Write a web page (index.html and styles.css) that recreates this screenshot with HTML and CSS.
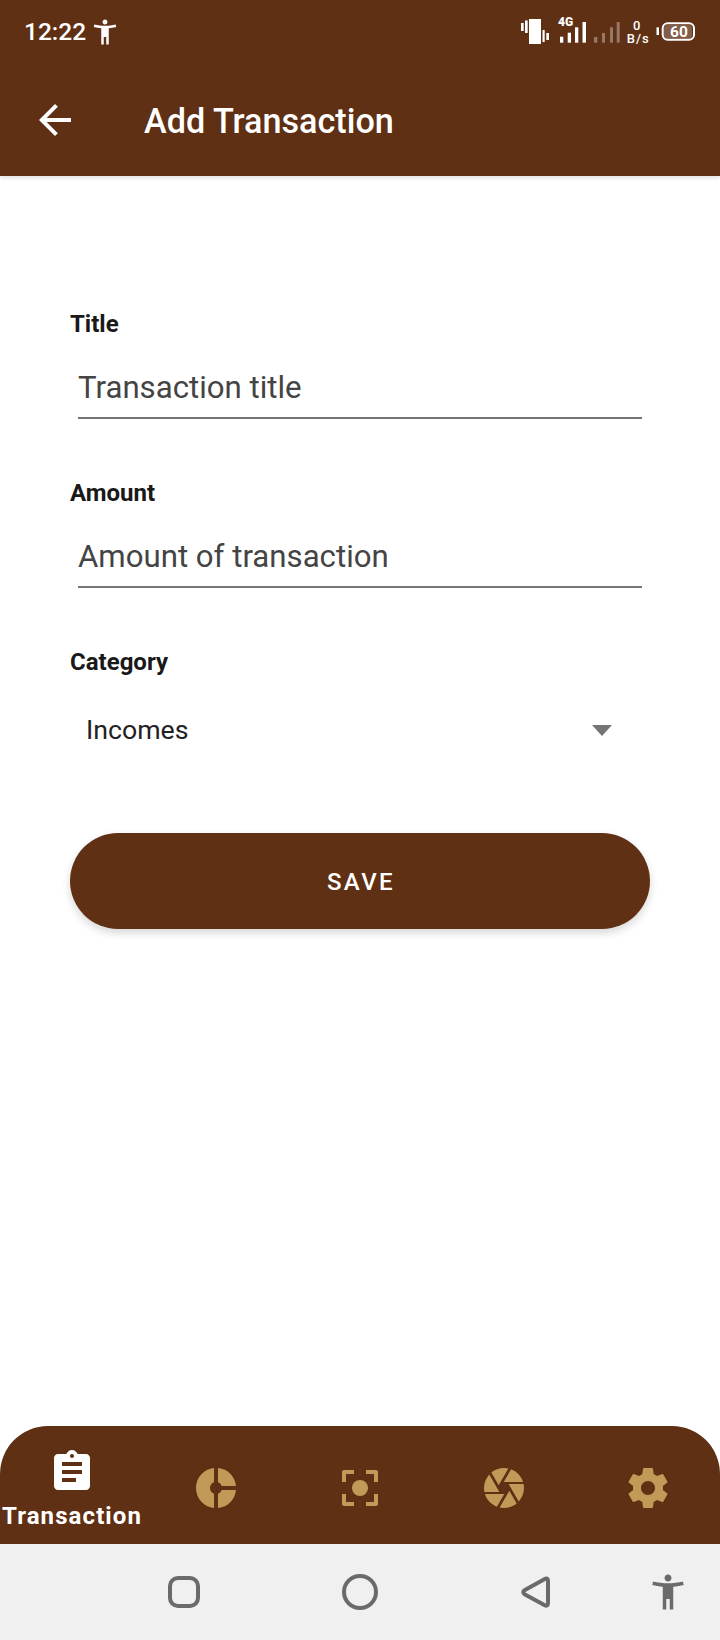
FILE: index.html
```html
<!DOCTYPE html>
<html lang="en">
<head>
    <meta charset="UTF-8">
    <meta name="viewport" content="width=device-width, initial-scale=1.0">
    <title>Add Transaction</title>
    <link rel="stylesheet" href="styles.css">
</head>
<body>
    <header class="app_header">
        <div class="status_bar">
            <div class="status_left">
                <span class="status_time">12:22</span>
                <svg class="status_person" viewBox="0 0 24 24"><path d="M20.5 6c-2.61.7-5.67 1-8.5 1s-5.89-.3-8.5-1L3 8c1.86.5 4 .83 6 1v13h2v-6h2v6h2V9c2-.17 4.14-.5 6-1l-.5-2zM12 6c1.1 0 2-.9 2-2s-.9-2-2-2-2 .9-2 2 .9 2 2 2z"/></svg>
            </div>
            <svg class="status_right" viewBox="520 10 177 36">
                <!-- vibrate -->
                <rect x="521" y="23" width="2.7" height="8"/>
                <rect x="525" y="20.5" width="2.7" height="12.5"/>
                <rect x="529" y="19" width="12" height="25"/>
                <rect x="542.5" y="30" width="2.2" height="12"/>
                <rect x="546.3" y="33" width="2.7" height="7"/>
                <!-- signal 1 -->
                <text x="558" y="26" class="tiny_bold">4G</text>
                <rect x="560" y="36.7" width="3.3" height="6"/>
                <rect x="567.7" y="32.7" width="3.3" height="10"/>
                <rect x="575" y="27.3" width="3.3" height="15.4"/>
                <rect x="582.5" y="22" width="3.5" height="20.7"/>
                <!-- signal 2 -->
                <g class="dim">
                    <rect x="594" y="37" width="3.3" height="5.7"/>
                    <rect x="602" y="33" width="3" height="9.7"/>
                    <rect x="610" y="27.3" width="3" height="15.4"/>
                    <rect x="616.7" y="22" width="3" height="20.7"/>
                </g>
                <!-- speed -->
                <text x="633" y="30" class="speed">0</text>
                <text x="626.7" y="43.3" class="speed spaced">B/s</text>
                <!-- battery -->
                <rect x="656.5" y="27.3" width="2.5" height="7.7"/>
                <rect x="664" y="25" width="28" height="13.5" rx="3" class="battery_fill"/>
                <rect x="662.7" y="23.3" width="31.3" height="16.4" rx="5" class="battery_line"/>
                <text x="670" y="37.3" class="battery_text">60</text>
            </svg>
        </div>
        <div class="toolbar">
            <svg class="back_icon" viewBox="0 0 24 24"><path d="M20 11H7.83l5.59-5.59L12 4l-8 8 8 8 1.41-1.41L7.83 13H20v-2z"/></svg>
            <h1 class="toolbar_title">Add Transaction</h1>
        </div>
    </header>

    <main class="page_body">
        <form class="transaction_form">
            <div class="form_group">
                <div class="form_label">Title</div>
                <div class="text_field">Transaction title</div>
            </div>
            <div class="form_group">
                <div class="form_label">Amount</div>
                <div class="text_field">Amount of transaction</div>
            </div>
            <div class="form_group">
                <div class="form_label">Category</div>
                <div class="select_field">
                    <span>Incomes</span>
                    <span class="select_arrow"></span>
                </div>
            </div>
            <div class="save_button">SAVE</div>
        </form>
    </main>

    <nav class="bottom_nav">
        <div class="nav_item active">
            <svg viewBox="0 0 24 24"><path d="M19 3h-4.18C14.4 1.84 13.3 1 12 1c-1.3 0-2.4.84-2.82 2H5c-1.1 0-2 .9-2 2v14c0 1.1.9 2 2 2h14c1.1 0 2-.9 2-2V5c0-1.1-.9-2-2-2zm-7 0c.55 0 1 .45 1 1s-.45 1-1 1-1-.45-1-1 .45-1 1-1zm2 14H7v-2h7v2zm3-4H7v-2h10v2zm0-4H7V7h10v2z"/></svg>
            <span class="nav_label">Transaction</span>
        </div>
        <div class="nav_item">
            <svg viewBox="0 0 24 24"><path d="M11 9.16V2c-5 .5-9 4.79-9 10s4 9.5 9 10v-7.16c-1.19-.41-2-1.52-2-2.84s.81-2.43 2-2.84zM14.86 11H22c-.48-4.75-4-8.53-9-9v7.16c.85.3 1.54.99 1.86 1.84zM13 14.84V22c5-.47 8.52-4.25 9-9h-7.14c-.3.85-.99 1.54-1.86 1.84z"/></svg>
        </div>
        <div class="nav_item">
            <svg viewBox="0 0 24 24"><path d="M5 15H3v5c0 .55.45 1 1 1h5v-2H5v-4zM5 5h4V3H4c-.55 0-1 .45-1 1v5h2V5zm10-2v2h4v4h2V4c0-.55-.45-1-1-1h-5zm4 16h-4v2h5c.55 0 1-.45 1-1v-5h-2v4z"/><circle cx="12" cy="12" r="4"/></svg>
        </div>
        <div class="nav_item">
            <svg viewBox="0 0 24 24"><path d="M9.4 10.5l4.77-8.26C13.47 2.09 12.75 2 12 2c-2.4 0-4.6.85-6.32 2.25l3.66 6.35.06-.1zM21.54 9c-.92-2.92-3.15-5.26-6-6.34L11.88 9h9.66zm.26 1h-7.49l.29.5 4.76 8.25C21 16.97 22 14.61 22 12c0-.69-.07-1.35-.2-2zM8.54 12l-3.9-6.75C3.01 7.03 2 9.39 2 12c0 .69.07 1.35.2 2h7.49l-1.15-2zm-6.08 3c.92 2.92 3.15 5.26 6 6.34L12.12 15H2.46zm11.27 0l-3.9 6.76c.7.15 1.42.24 2.17.24 2.4 0 4.6-.85 6.32-2.25l-3.66-6.35-.93 1.6z"/></svg>
        </div>
        <div class="nav_item">
            <svg viewBox="0 0 24 24"><path d="M19.43 12.98c.04-.32.07-.64.07-.98s-.03-.66-.07-.98l2.11-1.65c.19-.15.24-.42.12-.64l-2-3.46c-.12-.22-.39-.3-.61-.22l-2.49 1c-.52-.4-1.08-.73-1.69-.98l-.38-2.65C14.46 2.18 14.25 2 14 2h-4c-.25 0-.46.18-.49.42l-.38 2.65c-.61.25-1.17.59-1.69.98l-2.49-1c-.23-.09-.49 0-.61.22l-2 3.46c-.13.22-.07.49.12.64l2.11 1.65c-.04.32-.07.65-.07.98s.03.66.07.98l-2.11 1.65c-.19.15-.24.42-.12.64l2 3.46c.12.22.39.3.61.22l2.49-1c.52.4 1.08.73 1.69.98l.38 2.65c.03.24.24.42.49.42h4c.25 0 .46-.18.49-.42l.38-2.65c.61-.25 1.17-.59 1.69-.98l2.49 1c.23.09.49 0 .61-.22l2-3.46c.12-.22.07-.49-.12-.64l-2.11-1.65zM12 15.5c-1.93 0-3.5-1.57-3.5-3.5s1.57-3.5 3.5-3.5 3.5 1.57 3.5 3.5-1.57 3.5-3.5 3.5z"/></svg>
        </div>
    </nav>

    <div class="system_nav">
        <svg class="sys_icon" viewBox="0 0 36 36"><rect x="4" y="4" width="28" height="28" rx="8"/></svg>
        <svg class="sys_icon" viewBox="0 0 40 40"><circle cx="20" cy="20" r="16"/></svg>
        <svg class="sys_icon" viewBox="0 0 36 36"><path d="M30 6.5v23c0 2-1.6 2.6-3.2 1.7L6.5 20.2c-1.6-.9-1.6-3 0-3.9L26.8 4.9c1.6-.9 3.2-.4 3.2 1.6z"/></svg>
        <svg class="sys_person" viewBox="0 0 24 24"><path d="M20.5 6c-2.61.7-5.67 1-8.5 1s-5.89-.3-8.5-1L3 8c1.86.5 4 .83 6 1v13h2v-6h2v6h2V9c2-.17 4.14-.5 6-1l-.5-2zM12 6c1.1 0 2-.9 2-2s-.9-2-2-2-2 .9-2 2 .9 2 2 2z"/></svg>
    </div>
</body>
</html>
```

FILE: styles.css
```css
* {
    box-sizing: border-box;
}

body {
    margin: 0;
    height: 1640px;
    display: flex;
    flex-direction: column;
    background-color: #fff;
    font-family: "Roboto", "Liberation Sans", sans-serif;
}

/* header */
.app_header {
    height: 176px;
    background-color: #5f3014;
    box-shadow: 0 2px 4px rgba(0, 0, 0, 0.12);
    color: #fff;
}

.status_bar {
    height: 64px;
    display: flex;
    justify-content: space-between;
    align-items: center;
}

.status_left {
    display: flex;
    align-items: center;
    padding-left: 24px;
}

.status_time {
    font-size: 24.5px;
    font-weight: 500;
    line-height: 66px;
}

.status_person {
    width: 30px;
    height: 30px;
    margin-left: 4px;
    fill: #fff;
}

.status_right {
    width: 177px;
    height: 36px;
    margin-right: 23px;
    margin-top: -8px;
    fill: #fff;
}

.dim {
    opacity: 0.35;
}

.tiny_bold {
    font-size: 12px;
    font-weight: 900;
}

.speed {
    font-size: 13px;
    font-weight: 500;
}

.spaced {
    letter-spacing: 1px;
}

.battery_fill {
    opacity: 0.22;
}

.battery_line {
    fill: none;
    stroke: #fff;
    stroke-width: 2;
}

.battery_text {
    font-size: 15.5px;
    font-weight: 700;
}

.toolbar {
    height: 112px;
    display: flex;
    align-items: center;
    padding-left: 31px;
}

.back_icon {
    width: 48px;
    height: 48px;
    fill: #fff;
}

.toolbar_title {
    margin: 2px 0 0 65px;
    font-size: 34.2px;
    font-weight: 500;
}

/* form */
.page_body {
    flex: 1;
}

.transaction_form {
    padding: 134px 70px 0;
}

.form_group {
    height: 169px;
}

.form_label {
    font-size: 24px;
    font-weight: 700;
    line-height: 28px;
    color: #191919;
}

.text_field {
    width: 564px;
    height: 81px;
    margin-left: 8px;
    border-bottom: 2px solid #757575;
    padding-top: 30px;
    font-size: 31.2px;
    line-height: 40px;
    color: #444;
}

.select_field {
    display: flex;
    justify-content: space-between;
    align-items: center;
    height: 68px;
    margin-top: 20px;
    padding: 0 38px 0 16px;
    font-size: 26.7px;
    color: #222;
}

.select_arrow {
    border-left: 10px solid transparent;
    border-right: 10px solid transparent;
    border-top: 11px solid #757575;
}

.save_button {
    height: 96px;
    margin-top: 16px;
    padding-left: 2px;
    border-radius: 48px;
    background-color: #5f3014;
    box-shadow: 0 4px 8px rgba(0, 0, 0, 0.16);
    color: #fff;
    font-size: 24px;
    font-weight: 500;
    letter-spacing: 2.4px;
    line-height: 98px;
    text-align: center;
}

/* bottom navigation */
.bottom_nav {
    height: 118px;
    display: grid;
    grid-template-columns: repeat(5, 144px);
    border-radius: 48px 48px 0 0;
    background-color: #5f3014;
}

.nav_item {
    display: flex;
    flex-direction: column;
    align-items: center;
    justify-content: center;
    padding-top: 6px;
}

.nav_item svg {
    width: 48px;
    height: 48px;
    fill: #c29a58;
}

.nav_item.active {
    justify-content: flex-start;
    padding-top: 22px;
}

.nav_item.active svg {
    fill: #fff;
}

.nav_label {
    color: #fff;
    font-size: 24px;
    font-weight: 700;
    letter-spacing: 1.1px;
    line-height: 28px;
    margin-top: 6px;
    white-space: nowrap;
}

/* android buttons */
.system_nav {
    height: 96px;
    display: grid;
    grid-template-columns: 96px 176px 176px 176px 88px;
    align-items: center;
    justify-items: center;
    background-color: #f0f0f1;
}

.sys_icon {
    grid-row: 1;
    width: 36px;
    height: 36px;
    fill: none;
    stroke: #6a6a6a;
    stroke-width: 4;
}

.sys_icon:nth-child(1) {
    grid-column: 2;
}

.sys_icon:nth-child(2) {
    grid-column: 3;
    width: 40px;
    height: 40px;
}

.sys_icon:nth-child(3) {
    grid-column: 4;
}

.sys_person {
    grid-column: 5;
    grid-row: 1;
    width: 42px;
    height: 42px;
    fill: #6a6a6a;
}
```
